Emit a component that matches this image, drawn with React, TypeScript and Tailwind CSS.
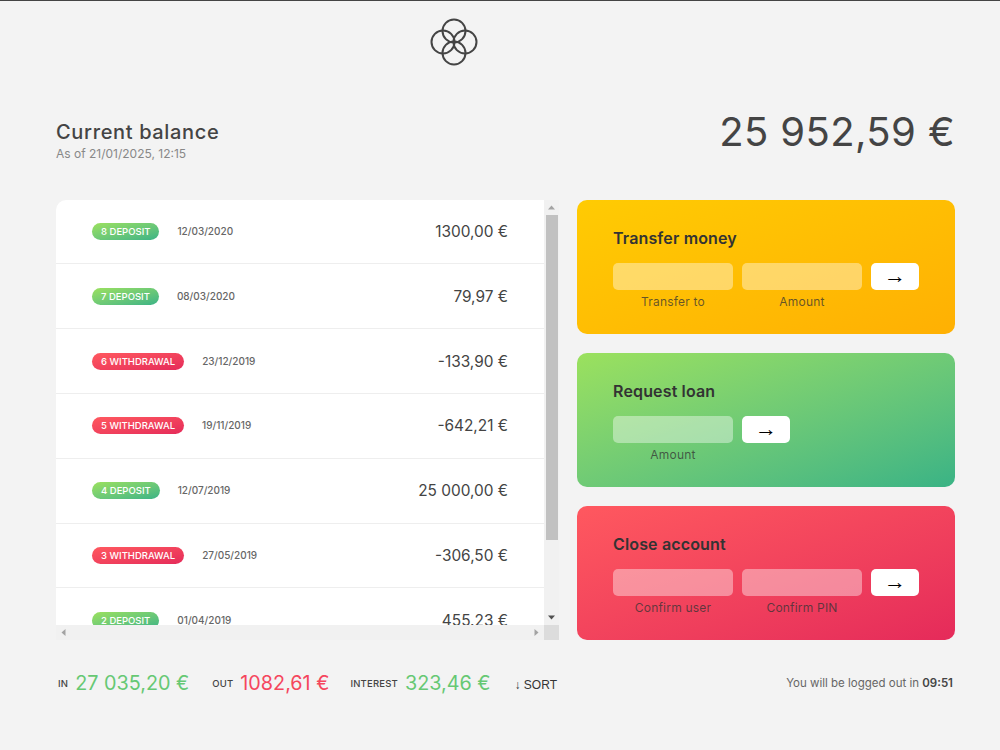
const movements = [
  { n: 8, type: "deposit", date: "12/03/2020", value: "1300,00 €" },
  { n: 7, type: "deposit", date: "08/03/2020", value: "79,97 €" },
  { n: 6, type: "withdrawal", date: "23/12/2019", value: "-133,90 €" },
  { n: 5, type: "withdrawal", date: "19/11/2019", value: "-642,21 €" },
  { n: 4, type: "deposit", date: "12/07/2019", value: "25 000,00 €" },
  { n: 3, type: "withdrawal", date: "27/05/2019", value: "-306,50 €" },
  { n: 2, type: "deposit", date: "01/04/2019", value: "455.23 €" },
  { n: 1, type: "deposit", date: "18/11/2018", value: "200,00 €" },
];

function Logo() {
  return (
    <svg width="48" height="50" viewBox="0 0 48 50" fill="none" stroke="#444" strokeWidth="2">
      <circle cx="24" cy="13" r="11.5" />
      <circle cx="24" cy="35" r="11.5" />
      <circle cx="13" cy="24" r="11.5" />
      <circle cx="35" cy="24" r="11.5" />
    </svg>
  );
}

function Triangle(props: { points: string; fill: string }) {
  return (
    <svg width="9" height="9" viewBox="0 0 9 9">
      <polygon points={props.points} fill={props.fill} />
    </svg>
  );
}

function Card(props: {
  title: string;
  gradient: string;
  labels: string[];
}) {
  return (
    <div className={`h-[134.67px] rounded-[10px] px-9 pt-[28px] text-[#333] ${props.gradient}`}>
      <h2 className="mb-[15px] text-[16px] leading-[20px] font-semibold tracking-[0.15px]">{props.title}</h2>
      <div className="flex gap-[9px]">
        {props.labels.map((label) => (
          <div key={label} className="w-[120px]">
            <div className="h-[27px] rounded-[5px] bg-white/40" />
            <p className="mt-[3px] text-center text-[12px] leading-[18px] tracking-[0.2px] text-[#333]/75">{label}</p>
          </div>
        ))}
        <button className="flex h-[27px] w-[48px] items-center justify-center rounded-[5px] bg-white font-['Liberation_Sans',sans-serif] text-[22px] leading-none text-black">
          →
        </button>
      </div>
    </div>
  );
}

function Summary(props: { label: string; value: string; color: string; className: string }) {
  return (
    <div className={`flex items-center gap-[7px] ${props.className}`}>
      <span className="mt-[4px] text-[9.5px] font-medium tracking-[0.2px] text-[#444]">{props.label}</span>
      <span className={`text-[19.8px] leading-[30px] ${props.color}`}>{props.value}</span>
    </div>
  );
}

export default function App() {
  return (
    <div className="h-[750px] overflow-hidden border-t border-[#444] bg-[#f3f3f3] font-['Inter',sans-serif] text-[#444]">
      <nav className="h-[81px] pt-[17px] pl-[430px]">
        <Logo />
      </nav>

      <div className="mx-[56px] flex h-[117.6px] w-[899px] items-start justify-between pt-[37px]">
        <div>
          <p className="text-[20px] leading-[26px] font-medium tracking-[0.65px]">Current balance</p>
          <p className="text-[12px] leading-[18px] text-[#888]">As of 21/01/2025, 12:15</p>
        </div>
        <p className="-mt-[17px] text-[40px] leading-[60px] tracking-[0.4px]">25 952,59 €</p>
      </div>

      <main className="mx-[56px] grid w-[899px] grid-cols-[503px_378px] gap-[18px]">
        <div className="grid h-[440px] grid-cols-[488px_15px] grid-rows-[425px_15px] overflow-hidden rounded-tl-[10px] bg-[#f1f1f1]">
          <div className="overflow-hidden bg-white">
            {movements.map((m) => (
              <div key={m.n} className="flex h-[64.8px] items-center border-b border-[#eee] pr-[36px] pl-[36px]">
                <span
                  className={
                    m.type === "deposit"
                      ? "rounded-full bg-gradient-to-br from-[#9be15d] to-[#39b385] px-[9px] py-[1px] text-[9.5px] leading-[15px] font-medium text-white"
                      : "rounded-full bg-gradient-to-br from-[#ff585f] to-[#e52a5a] px-[9px] py-[1px] text-[9.5px] leading-[15px] font-medium text-white"
                  }
                >
                  {m.n} {m.type.toUpperCase()}
                </span>
                <span className="ml-[18px] text-[10px] font-medium text-[#666]">{m.date}</span>
                <span className="ml-auto text-[15.4px] text-[#444]">{m.value}</span>
              </div>
            ))}
          </div>

          {/* vertical scrollbar */}
          <div className="flex flex-col items-center bg-[#f1f1f1]">
            <div className="flex h-[15px] items-center justify-center">
              <Triangle points="4.5,2.5 8,6.5 1,6.5" fill="#a3a3a3" />
            </div>
            <div className="h-[325px] w-[12px] bg-[#c1c1c1]" />
            <div className="mt-auto flex h-[15px] items-center justify-center">
              <Triangle points="1,2.5 8,2.5 4.5,6.5" fill="#505050" />
            </div>
          </div>

          {/* horizontal scrollbar */}
          <div className="flex items-center justify-between bg-[#f1f1f1] px-[3px]">
            <Triangle points="2.5,4.5 6.5,1 6.5,8" fill="#a3a3a3" />
            <Triangle points="2.5,1 6.5,4.5 2.5,8" fill="#a3a3a3" />
          </div>
          <div className="bg-[#dcdcdc]" />
        </div>

        <div className="flex flex-col gap-[18.3px]">
          <Card
            title="Transfer money"
            gradient="bg-gradient-to-br from-[#ffcb03] to-[#ffb003]"
            labels={["Transfer to", "Amount"]}
          />
          <Card
            title="Request loan"
            gradient="bg-gradient-to-br from-[#9be15d] to-[#39b385]"
            labels={["Amount"]}
          />
          <Card
            title="Close account"
            gradient="bg-gradient-to-br from-[#ff585f] to-[#e52a5a]"
            labels={["Confirm user", "Confirm PIN"]}
          />
        </div>
      </main>

      <footer className="mx-[56px] mt-[27.4px] flex w-[899px] items-center">
        <Summary className="ml-[2px]" label="IN" value="27 035,20 €" color="text-[#66c873]" />
        <Summary className="ml-[23px]" label="OUT" value="1082,61 €" color="text-[#f5465d]" />
        <Summary className="ml-[21px]" label="INTEREST" value="323,46 €" color="text-[#66c873]" />
        <span className="mt-[4px] ml-[24px] font-['Liberation_Sans',sans-serif] text-[12px] text-[#333]">↓ SORT</span>
        <p className="mt-[2px] mr-[2px] ml-auto text-[11.5px] text-[#666]">
          You will be logged out in <span className="font-semibold text-[#444]">09:51</span>
        </p>
      </footer>
    </div>
  );
}
